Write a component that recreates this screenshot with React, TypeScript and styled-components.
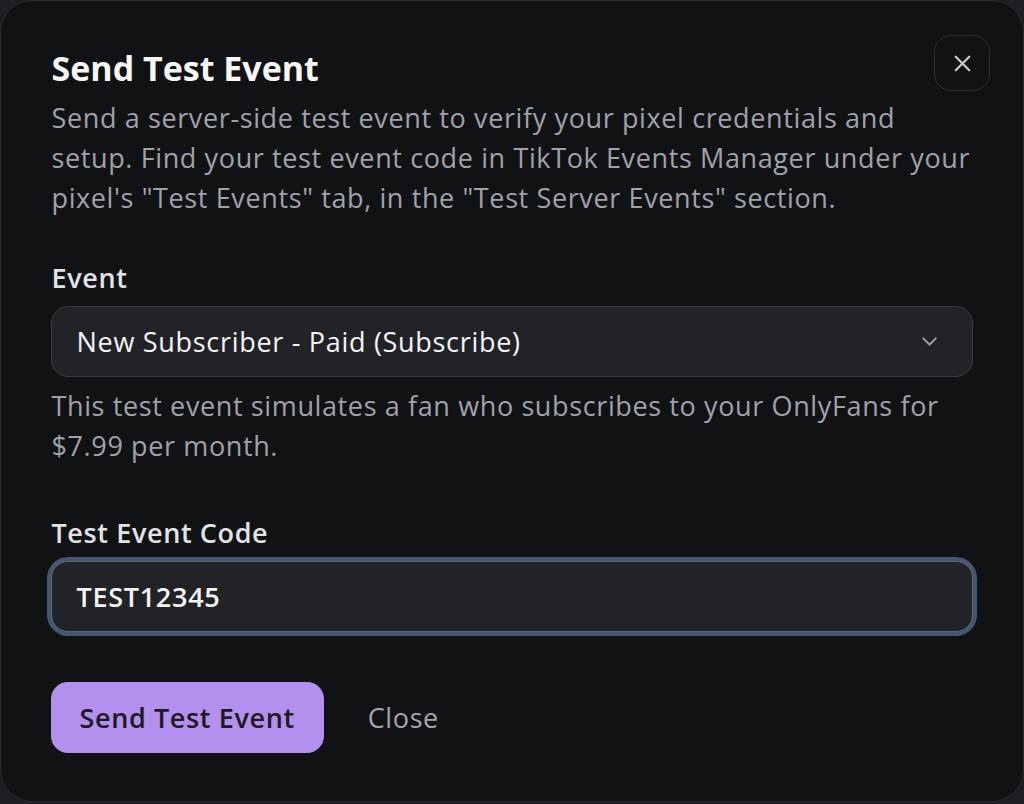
import React from "react";
import styled, { createGlobalStyle } from "styled-components";
import { ChevronDown, X } from "lucide-react";

const Global = createGlobalStyle`
  html, body { margin: 0; padding: 0; background: #1d1e21; }
  body { font-family: "Open Sans", "Noto Sans", sans-serif; }
  * { box-sizing: border-box; }
`;

const Dialog = styled.div`
  position: relative;
  width: 1024px;
  height: 802px;
  background: #111214;
  border: 1.5px solid #2a2b2f;
  border-radius: 32px;
  padding: 47px 50px 0 49.5px;
  display: flex;
  flex-direction: column;
  color: #f4f4f5;
`;

const Title = styled.h2`
  margin: 0 0 0 1px;
  font-size: 34px;
  line-height: 40px;
  font-weight: 700;
  color: #f7f7f8;
`;

const Description = styled.p`
  margin: 10px -5px 0 1px;
  font-size: 27px;
  line-height: 40px;
  letter-spacing: 0.62px;
  color: #a0a2aa;
  font-weight: 400;
`;

const Label = styled.label<{ $top: number }>`
  display: block;
  margin: ${(p) => p.$top}px 0 0 1px;
  font-size: 27px;
  line-height: 40px;
  letter-spacing: 0.62px;
  font-weight: 600;
  color: #e2e3e7;
`;

const Field = styled.div<{ $focused?: boolean }>`
  margin-top: 8px;
  height: 71px;
  width: 922px;
  display: flex;
  align-items: center;
  justify-content: space-between;
  padding: 0 30px 0 25px;
  background: #222326;
  border: 1.5px solid ${(p) => (p.$focused ? "#56667f" : "#3b3c41")};
  border-radius: 17px;
  box-shadow: ${(p) => (p.$focused ? "0 0 0 4px #46566f" : "none")};
  font-size: 27px;
  letter-spacing: 0.7px;
  color: #f4f4f6;
`;

const FieldText = styled.span<{ $weight?: number }>`
  font-weight: ${(p) => p.$weight ?? 400};
`;

const Helper = styled.p`
  margin: 9px -5px 0 1px;
  font-size: 27px;
  line-height: 40px;
  letter-spacing: 0.62px;
  color: #a0a2aa;
`;

const Actions = styled.div`
  margin-top: 50px;
  display: flex;
  align-items: center;
  gap: 44px;
`;

const PrimaryButton = styled.button`
  height: 71px;
  padding: 0 29px;
  border: none;
  border-radius: 17px;
  background: #b38fee;
  color: #1c1b22;
  font-family: inherit;
  font-size: 27px;
  letter-spacing: 0.62px;
  font-weight: 600;
  cursor: pointer;
`;

const GhostButton = styled.button`
  background: none;
  border: none;
  padding: 0;
  color: #a3a5ad;
  font-family: inherit;
  font-size: 27px;
  letter-spacing: 0.62px;
  font-weight: 500;
  cursor: pointer;
`;

const CloseButton = styled.button`
  position: absolute;
  top: 34px;
  right: 33px;
  width: 56px;
  height: 56px;
  border-radius: 17px;
  border: 1.5px solid #2d2e33;
  background: transparent;
  display: flex;
  align-items: center;
  justify-content: center;
  color: #c6c7cd;
  cursor: pointer;
`;

export default function App() {
  return (
    <>
      <Global />
      <Dialog>
        <CloseButton aria-label="Close">
          <X size={27} strokeWidth={2} />
        </CloseButton>
        <Title>Send Test Event</Title>
        <Description>
          Send a server-side test event to verify your pixel credentials and setup. Find your test
          event code in TikTok Events Manager under your pixel's "Test Events" tab, in the "Test
          Server Events" section.
        </Description>
        <Label $top={40}>Event</Label>
        <Field>
          <FieldText>New Subscriber - Paid (Subscribe)</FieldText>
          <ChevronDown size={25} color="#9c9ea6" strokeWidth={2} />
        </Field>
        <Helper>
          This test event simulates a fan who subscribes to your OnlyFans for $7.99 per month.
        </Helper>
        <Label $top={47}>Test Event Code</Label>
        <Field $focused>
          <FieldText $weight={600}>TEST12345</FieldText>
        </Field>
        <Actions>
          <PrimaryButton>Send Test Event</PrimaryButton>
          <GhostButton>Close</GhostButton>
        </Actions>
      </Dialog>
    </>
  );
}
